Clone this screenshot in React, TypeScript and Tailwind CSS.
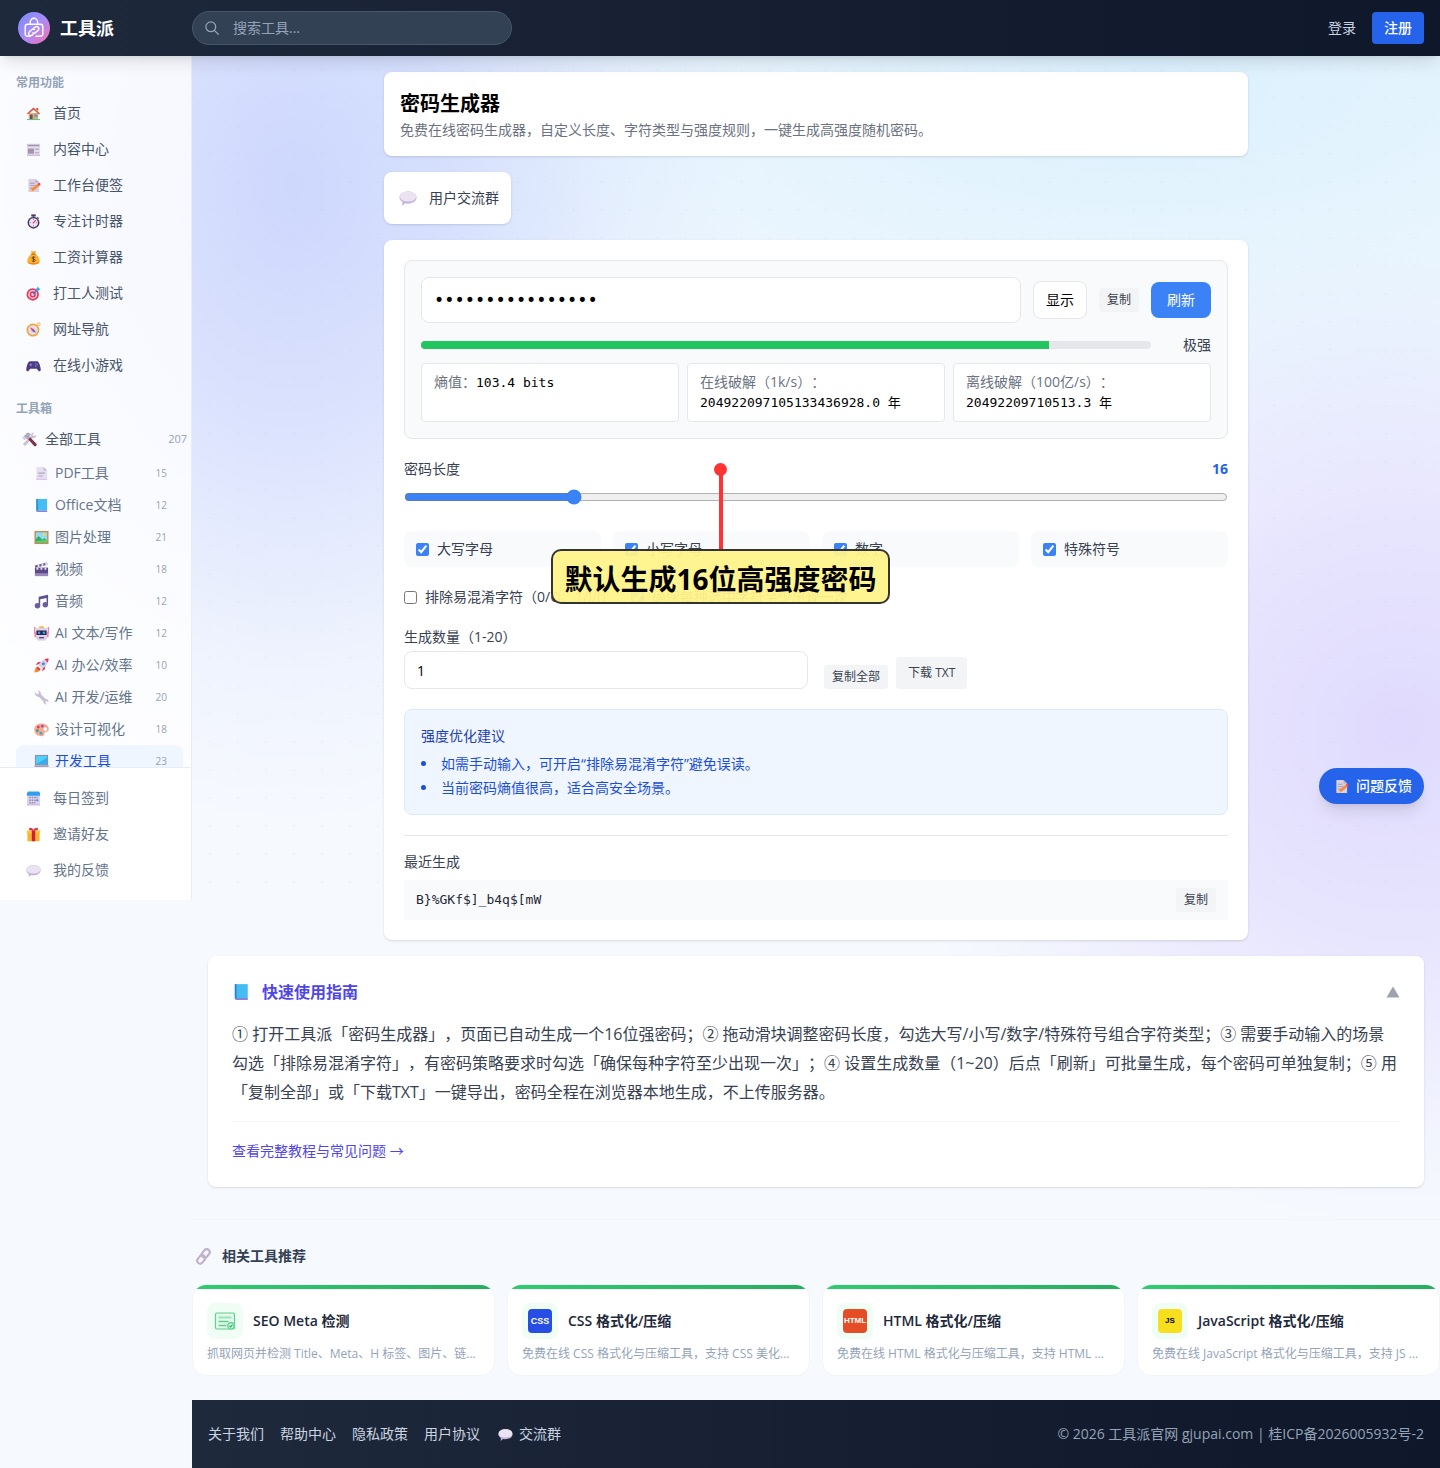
import { useState } from "react";
import type { ReactNode } from "react";

const emojiArt: Record<string, ReactNode> = {
  home: (
    <>
      <path d="M3 7.5h10V14H3z" fill="#e8a86a" />
      <path d="M1 8 8 1.5 15 8l-1 1L8 4 2 9z" fill="#e0533c" />
      <path d="M11 2.2h2v3.2l-2-1.8z" fill="#b5533c" />
      <path d="M4.2 9.2H7V14H4.2z" fill="#6b4a5c" />
      <path d="M9 9h3v2.6H9z" fill="#35a7ee" />
      <path d="M1 14h14v1H1z" fill="#3fc47a" />
    </>
  ),
  news: (
    <>
      <path d="M1 2h14v12.600H1z" fill="#e3dcea" />
      <path d="M1 2h14v3.200H1z" fill="#cfc6da" />
      <path d="M2.200 3.200h11.600v1H2.200z" fill="#9f92b0" />
      <path d="M2 7h6.500v5.500H2z" fill="#a294b0" />
      <path d="M9.800 7h4v1.500h-4zM9.800 10.600h4v1.500h-4z" fill="#b9aeca" />
      <path d="M1 13.600h14v1H1z" fill="#c9a8e0" />
    </>
  ),
  memo: (
    <>
      <path d="M2.5 1h7.6L14 4.8V15H2.5z" fill="#d9d2e2" />
      <path d="M10.1 1v3.8H14z" fill="#b6a7c8" />
      <path d="M4.2 5h5v1h-5zM4.2 7.6h7v1h-7zM4.2 10.2h3.6v1H4.2z" fill="#a79ab8" />
      <path d="m4.6 14.6.8-3L12.6 6l2 2.2-7 5.6z" fill="#fb8b3c" />
      <path d="m12.2 6.3 1.2-1c1.5-.5 2.4.8 2 2l-1.2 1z" fill="#ef4c50" />
      <path d="m4.4 14.8.9-2.6 2 1.6z" fill="#ffd0a0" />
    </>
  ),
  watch: (
    <>
      <path d="M5.6.4h4.8v2.2H5.6z" fill="#4a3a66" />
      <path d="M7 2h2v2H7zM12.4 2.8l1.6 1.5-1.1 1.1-1.6-1.5z" fill="#6d5a8c" />
      <circle cx="8" cy="9.2" r="6.4" fill="#4b3c68" />
      <circle cx="8" cy="9.2" r="4.8" fill="#eee6f5" />
      <path d="M8 5v1.4M8 12v1.4M3.9 9.2h1.3M10.8 9.2h1.3" stroke="#8a7aa6" />
      <path d="m7.4 10 3-3.4" stroke="#ef3c66" strokeWidth="1.4" />
    </>
  ),
  money: (
    <>
      <path d="M5.4.8c1.6 1 3.6 1 5.2 0L9.8 4H6.2z" fill="#f5a623" />
      <path d="M6.2 4h3.6c3 2 4.8 5 4.8 7.6 0 2.6-2 3.8-6.6 3.8s-6.6-1.2-6.6-3.8C1.400 9 3.200 6 6.200 4z" fill="#fbb02e" />
      <path d="M1.600 12.500c1 2 3 2.900 6.400 2.900s5.400-.9 6.400-2.900c-2 1.300-4 1.600-6.400 1.600s-4.400-.3-6.400-1.600z" fill="#ef7f1a" />
      <path d="M5.600 3.800h4.800v1.300H5.600z" fill="#c3691d" />
      <path d="M9.900 8.100C8.900 7.200 6.300 7.300 6.300 8.600c0 1.500 3.600.8 3.600 2.400 0 1.400-2.700 1.500-3.800.5M8 6.500v6.600" fill="none" stroke="#6b4423" />
    </>
  ),
  target: (
    <>
      <circle cx="7.200" cy="9" r="6.600" fill="#e8375e" />
      <circle cx="7.200" cy="9" r="4.800" fill="#f9d5e0" />
      <circle cx="7.200" cy="9" r="3.300" fill="#e8375e" />
      <circle cx="7.200" cy="9" r="1.500" fill="#fff" />
      <path d="m7.200 9 5-5" stroke="#2f6fd0" strokeWidth="1.300" />
      <path d="m10.800 3.200 2-2.800.8 2 2 .8-2.800 2.200-2.200.2z" fill="#35a7ee" />
    </>
  ),
  compass: (
    <>
      <circle cx="13.600" cy="2.400" r="1.500" fill="none" stroke="#f3b04a" />
      <circle cx="7.400" cy="8.600" r="6.900" fill="#f0a43c" />
      <circle cx="7.400" cy="8.600" r="5.200" fill="#e5dcec" />
      <path d="m4.200 5.600 4.400 2-2.200 2z" fill="#e2476a" />
      <path d="m10.600 11.700-4.300-2 2.200-2.100z" fill="#6d5a8c" />
    </>
  ),
  game: (
    <>
      <path d="M4.200 3.400h7.600c2 0 3.600 5 3.900 8.600.2 2.600-1.800 2.700-2.800 1.200L11.600 11.400H4.400L3.100 13.200C2.100 14.700.1 14.600.3 12 .6 8.400 2.200 3.400 4.200 3.400z" fill="#4d3b8a" />
      <path d="M3.600 7.200h3M5.100 5.700v3" stroke="#9b8bd0" />
      <circle cx="10.400" cy="6" r=".8" fill="#35a7ee" />
      <circle cx="12" cy="7.200" r=".8" fill="#ef4c66" />
      <circle cx="10.400" cy="8.500" r=".8" fill="#3fc47a" />
    </>
  ),
  tools: (
    <>
      <path d="m1 12.800 8.600-8.600c-.4-2 1.200-3.800 3.400-3.600l-1.600 1.800.4 1.500 1.500.4L15.300 3c.4 2.300-1.600 4-3.700 3.500L3.200 15z" fill="#c9c0d4" />
      <path d="m6.600 7.600 2-2 6.800 7c1 1.600-1 3.400-2.500 2.200z" fill="#7d3348" />
      <path d="M.4 6 5.600.8c1.800 0 2.800.6 4 1.800L7.800 4.200l1 1.200L6 8.200 4.800 7 2.600 8.400z" fill="#b3a6c2" />
      <path d="M.4 6 2 4.400l2.400 2.300-1.800 1.700z" fill="#dcd4e6" />
    </>
  ),
  page: (
    <>
      <path d="M2.5 1h7.7L14 4.800V15H2.500z" fill="#e6dff0" />
      <path d="M10.200 1v3.800H14z" fill="#c4b5d6" />
      <path d="M4.600 7h7v1.200h-7zM4.600 10h5v1.200h-5z" fill="#b3a5c6" />
      <path d="M2.500 13.800H14V15H2.500z" fill="#dcc3ee" />
    </>
  ),
  book: (
    <>
      <path d="M2.500 1H14v12.500H2.500z" fill="#45bdf2" />
      <path d="M2.500 1H4v13.500H2.500z" fill="#2a84cd" />
      <path d="M3 13.300h11V15H3.500z" fill="#8b83d6" />
    </>
  ),
  picture: (
    <>
      <path d="M.5 1h15v14H.5z" fill="#c98a52" />
      <path d="M2 2.500h12v11H2z" fill="#8edcf5" />
      <circle cx="10.800" cy="5" r="1.500" fill="#ffd34d" />
      <path d="m2 9.500 3-3 4 4 2-2 3 3v2H2z" fill="#2fae6b" />
      <path d="M2 12c4-1.500 8-.5 12-2v3.500H2z" fill="#62cc66" />
    </>
  ),
  film: (
    <>
      <path d="M1 6h14v9H1z" fill="#5b4a86" />
      <path d="M1 12h14v3H1z" fill="#9a89bd" />
      <path d="m.8 3.600 13-3.200.6 2.600L1.400 6.200z" fill="#6a5898" />
      <path d="m3.600 3 2-.5.4 2.600-2 .5zM7.800 2l2-.5.4 2.600-2 .5zM11.800 1l1.800-.4.5 2.500-1.800.4zM2.600 6.200h2v2h-2zM6.900 6.200h2v2h-2zM11.200 6.200h2v2h-2z" fill="#e3dbf0" />
    </>
  ),
  music: (
    <>
      <path d="M5 2.800 15 .8V4L6.600 5.600V13H5z" fill="#5f5190" />
      <path d="M13.400 2H15v9.500h-1.600z" fill="#5f5190" />
      <circle cx="3.700" cy="12.600" r="2.900" fill="#6c5da0" />
      <circle cx="12.100" cy="11.400" r="2.900" fill="#6c5da0" />
    </>
  ),
  robot: (
    <>
      <path d="M.8 1v7M15.200 1v7" stroke="#e0527c" />
      <path d="M5.500.4h5V3h-5z" fill="#f1b23e" />
      <path d="M2 2h12v11l-2.500 2.600h-7L2 13z" fill="#ddd3e8" />
      <path d="M.4 6h1.800v6H.4zM13.800 6h1.800v6h-1.800z" fill="#f08aa8" />
      <path d="M2.600 4.800h10.800v4.800H2.600z" fill="#2e2550" />
      <circle cx="5.400" cy="7.200" r="1.300" fill="#35a7ee" />
      <circle cx="10.600" cy="7.200" r="1.300" fill="#35a7ee" />
      <path d="M5.400 11.700h5.200v1.500H5.400z" fill="#5a4a78" />
    </>
  ),
  rocket: (
    <>
      <path d="M6 6.500 1.600 7.400 4 4.500l3.500-.6zM9.500 10l-.9 4.400 2.900-2.400.6-3.500z" fill="#e8375e" />
      <path d="M15.500.5c.4 4-2.500 8-7 11L4.500 7.500c3-4.500 7-7.400 11-7z" fill="#d9d0e4" />
      <path d="M15.500.5c0 1.700-.3 2.800-.9 4.200L11.300 1.400C12.700.8 13.800.5 15.500.5z" fill="#e8375e" />
      <circle cx="10" cy="6" r="1.600" fill="#3a8fdc" />
      <path d="M4 9 7 12c-1 2.500-3.500 3.500-6.500 3.500C.5 12.500 1.500 10 4 9z" fill="#f98a2e" />
      <path d="M4 9 7 12l-1.800 1.500L2.500 11z" fill="#e0435a" />
    </>
  ),
  wrench: (
    <path
      d="M1 2.200 3.400 4.400 5 3.800 5.200 2.200 3.200.8C5.800.2 7.800 2 7.400 4.600l5 5c2.200-.3 3.600 1.600 3 3.800l-1.700-1.500-1.400.4-.3 1.500 1.600 1.500c-2.300.5-4-1-3.700-3.200L5 7.200C2.600 7.600.4 5 1 2.200z"
      fill="#c9bfd6"
    />
  ),
  palette: (
    <>
      <path d="M8 1.500c5.200 0 8 2.800 7.800 6.600-.2 2.800-3.200 2.200-4.200 3.200-1.200 1.200 0 3.600-2.600 3.800C4 15.300.2 12.300.2 8.200.2 4.300 3.500 1.500 8 1.500z" fill="#f7a98a" />
      <circle cx="12" cy="7.600" r="1.900" fill="#fff" />
      <circle cx="8.800" cy="4.400" r="1.500" fill="#9650d8" />
      <circle cx="4.600" cy="5.400" r="1.500" fill="#e8375e" />
      <circle cx="3.600" cy="9.200" r="1.500" fill="#2aa198" />
      <circle cx="7.400" cy="12" r="1.500" fill="#35a7ee" />
    </>
  ),
  laptop: (
    <>
      <path d="M1 1h14v11H1z" fill="#8f86a3" />
      <path d="M2 2h12v9H2z" fill="#4ed0f7" />
      <path d="m2 11 12-7v7z" fill="#35aef0" />
      <path d="M.3 12h15.400l-.5 2.500H.8z" fill="#a79eb8" />
    </>
  ),
  calendar: (
    <>
      <path d="M1 4h14v11.200H1z" fill="#ddd5ee" />
      <path d="M2.500.6h11L15 2v3H1V2z" fill="#2f9df0" />
      <path d="M3.500 7h9M3.500 9.800h9M3.500 12.600h6.500" stroke="#8d84ae" strokeWidth="1.600" strokeDasharray="1.600 1" />
      <path d="M11.200 9h2v2h-2z" fill="#2f9df0" />
      <path d="M1 14.300h14v1H1z" fill="#cbb0ec" />
    </>
  ),
  gift: (
    <>
      <path d="M1.500 6h13v9.200h-13z" fill="#fbb12f" />
      <path d="M.8 3.600h14.400v3.200H.8z" fill="#fdc640" />
      <path d="M6.200 3.600h3.600v11.600H6.200z" fill="#c92040" />
      <path d="M8 3.800C4.500 4 2.600 3 3.200 1.500 4 0 7 .8 8 3c1-2.200 4-3 4.800-1.500C13.400 3 11.500 4 8 3.800z" fill="#e3334f" />
    </>
  ),
  chat: (
    <>
      <path d="M8 2.200c4.200 0 7.600 2.300 7.600 5.400S12.200 13 8 13c-.9 0-1.700-.1-2.500-.3L2.800 14.800l.3-3.200C1.400 10.600.4 9.200.4 7.600c0-3.100 3.400-5.400 7.600-5.400z" fill="#c4b0dc" />
      <path d="M8 2.400c4.200 0 7.200 1.800 7.200 4.400S12.200 11.200 8 11.200.8 9.400.8 6.800 3.800 2.400 8 2.400z" fill="#ebe3f2" />
    </>
  ),
  link: (
    <g fill="none" stroke="#bfb0cc" strokeWidth="2">
      <rect x="7.300" y="0.800" width="5.600" height="8.600" rx="2.800" transform="rotate(38 10.100 5.100)" />
      <rect x="3" y="6.400" width="5.600" height="8.600" rx="2.800" transform="rotate(38 5.800 10.700)" />
    </g>
  ),
};

function Emoji({ name, className = "size-4" }: { name: string; className?: string }) {
  return (
    <svg viewBox="0 0 16 16" className={`shrink-0 ${className}`} aria-hidden="true">
      {emojiArt[name]}
    </svg>
  );
}

const commonLinks = [
  { icon: "home", label: "首页" },
  { icon: "news", label: "内容中心" },
  { icon: "memo", label: "工作台便签" },
  { icon: "watch", label: "专注计时器" },
  { icon: "money", label: "工资计算器" },
  { icon: "target", label: "打工人测试" },
  { icon: "compass", label: "网址导航" },
  { icon: "game", label: "在线小游戏" },
];

const categories = [
  { icon: "page", label: "PDF工具", count: 15 },
  { icon: "book", label: "Office文档", count: 12 },
  { icon: "picture", label: "图片处理", count: 21 },
  { icon: "film", label: "视频", count: 18 },
  { icon: "music", label: "音频", count: 12 },
  { icon: "robot", label: "AI 文本/写作", count: 12 },
  { icon: "rocket", label: "AI 办公/效率", count: 10 },
  { icon: "wrench", label: "AI 开发/运维", count: 20 },
  { icon: "palette", label: "设计可视化", count: 18 },
  { icon: "laptop", label: "开发工具", count: 23, active: true },
];

const userLinks = [
  { icon: "calendar", label: "每日签到" },
  { icon: "gift", label: "邀请好友" },
  { icon: "chat", label: "我的反馈" },
];

const related = [
  { icon: "seo", title: "SEO Meta 检测", desc: "抓取网页并检测 Title、Meta、H 标签、图片、链接与结构化数据" },
  { icon: "css", title: "CSS 格式化/压缩", desc: "免费在线 CSS 格式化与压缩工具，支持 CSS 美化、压缩与校验" },
  { icon: "html", title: "HTML 格式化/压缩", desc: "免费在线 HTML 格式化与压缩工具，支持 HTML 美化与压缩" },
  { icon: "js", title: "JavaScript 格式化/压缩", desc: "免费在线 JavaScript 格式化与压缩工具，支持 JS 代码美化" },
];

function Header() {
  return (
    <header className="relative z-20 flex h-14 items-center bg-linear-to-r from-[#1e293b] to-[#0f172a] pr-4 shadow-lg">
      <a href="#" className="flex w-48 shrink-0 items-center gap-2.5 pl-[18px]">
        <svg viewBox="0 0 32 32" className="size-8" aria-hidden="true">
          <defs>
            <linearGradient id="logo" x1="0" y1="0" x2="1" y2="1">
              <stop offset="0.1" stopColor="#818cf8" />
              <stop offset="0.5" stopColor="#a78bfa" />
              <stop offset="0.95" stopColor="#f472b6" />
            </linearGradient>
          </defs>
          <circle cx="16" cy="16" r="16" fill="url(#logo)" />
          <g fill="none" stroke="#fff" strokeWidth="1.400" strokeLinecap="round">
            <path d="M12 24.300H9.500a2.300 2.300 0 0 1-2.300-2.300v-7.500a2.300 2.300 0 0 1 2.300-2.300h13a2.300 2.300 0 0 1 2.300 2.300V22a2.300 2.300 0 0 1-2.300 2.300H18" />
            <path d="M12.200 12V10a3.700 3.700 0 0 1 7.400 0v2" />
            <path d="m15.500 16.300 1.600-1.300c2.400-1.600 5 1.200 3 3.300l-2.600 2.300c-1 .8-2 .6-2.700.2" />
            <path d="m15.200 22.200-1.200 1c-2.300 1.500-4.600-1.200-2.800-3.200l2.600-2.300c1-.8 2-.7 2.700-.2" />
          </g>
        </svg>
        <span className="text-lg font-bold text-white">工具派</span>
      </a>
      <label className="flex h-[34px] w-80 items-center gap-[14px] rounded-full border border-[#475569] bg-[#334155] px-3">
        <svg viewBox="0 0 14 14" className="size-[14px] shrink-0" fill="none" stroke="#94a3b8" strokeWidth="1.300" aria-hidden="true">
          <circle cx="5.800" cy="5.800" r="4.900" />
          <path d="m9.400 9.400 4.200 4.200" />
        </svg>
        <input
          type="search"
          aria-label="搜索工具"
          placeholder="搜索工具..."
          className="min-w-0 flex-1 bg-transparent text-sm text-white outline-none placeholder:text-[#94a3b8]"
        />
      </label>
      <div className="ml-auto flex items-center gap-4 text-sm">
        <a href="#" className="text-[#cbd5e1]">登录</a>
        <a href="#" className="rounded bg-[#2563eb] px-3 py-1.5 font-medium text-white">注册</a>
      </div>
    </header>
  );
}

function Sidebar() {
  return (
    <aside className="flex h-[844px] w-48 shrink-0 flex-col border-r border-[#e8edf5] bg-white/80 text-sm">
      <nav className="min-h-0 flex-1 overflow-hidden pt-[17px]">
        <h2 className="mb-0.5 px-4 text-xs/5 font-bold text-[#94a3b8]">常用功能</h2>
        {commonLinks.map((item) => (
          <a key={item.label} href="#" className="flex h-9 items-center gap-3 pl-[26px] text-[#475569]">
            <Emoji name={item.icon} className="size-[15px]" />
            {item.label}
          </a>
        ))}
        <h2 className="mt-4 mb-0.5 px-4 text-xs/5 font-bold text-[#94a3b8]">工具箱</h2>
        <a href="#" className="flex h-9 items-center gap-2 pr-1 pl-[22px] text-[#475569]">
          <Emoji name="tools" className="size-[15px]" />
          全部工具
          <span className="ml-auto text-[11px] text-[#94a3b8]">207</span>
        </a>
        {categories.map((item) => (
          <a
            key={item.label}
            href="#"
            className={`mr-2 ml-4 flex h-8 items-center gap-1.5 rounded-lg pr-4 pl-[18px] ${
              item.active ? "bg-[#eff6ff] text-[#1d4ed8]" : "text-[#64748b]"
            }`}
          >
            <Emoji name={item.icon} className="size-[15px]" />
            {item.label}
            <span className="ml-auto text-[10px] text-[#94a3b8]">{item.count}</span>
          </a>
        ))}
      </nav>
      <div className="border-t border-[#e8edf5] bg-white pt-3 pb-3">
        {userLinks.map((item) => (
          <a key={item.label} href="#" className="flex h-9 items-center gap-3 pl-[26px] text-[#64748b]">
            <Emoji name={item.icon} className="size-[15px]" />
            {item.label}
          </a>
        ))}
      </div>
    </aside>
  );
}

function SmallButton({ children, onClick }: { children: ReactNode; onClick?: () => void }) {
  return (
    <button type="button" onClick={onClick} className="rounded bg-[#f3f4f6] px-2 py-1 text-xs text-[#374151]">
      {children}
    </button>
  );
}

function Stat({ label, value }: { label: string; value: string }) {
  return (
    <div className="rounded border border-[#e5e7eb] bg-white px-3 py-2">
      <span className="text-[#6b7280]">{label}</span>
      <span className="font-['DejaVu_Sans_Mono','Noto_Sans_CJK_SC',monospace] text-[13px]/4 text-black">{value}</span>
    </div>
  );
}

function Generator() {
  const [password] = useState("B}%GKf$]_b4q$[mW");
  const [visible, setVisible] = useState(false);
  const [length, setLength] = useState(16);
  const strength = 86;

  return (
    <section className="relative rounded-lg bg-white p-5 text-sm shadow-sm">
      <div className="rounded-lg border border-[#e5e7eb] bg-[#f9fafb] p-4">
        <div className="flex items-center gap-3">
          <input
            type={visible ? "text" : "password"}
            aria-label="密码"
            readOnly
            value={password}
            className="h-[46px] min-w-0 flex-1 rounded-lg border border-[#e5e7eb] bg-white px-3 font-['DejaVu_Sans_Mono',monospace] text-[17px] text-black"
          />
          <button
            type="button"
            onClick={() => setVisible(!visible)}
            className="rounded-lg border border-[#e5e7eb] bg-white px-3 py-2 text-black"
          >
            {visible ? "隐藏" : "显示"}
          </button>
          <SmallButton>复制</SmallButton>
          <button type="button" className="rounded-lg bg-[#3b82f6] px-4 py-2 text-white">刷新</button>
        </div>
        <div className="mt-3 flex items-center gap-3">
          <div className="h-2 flex-1 overflow-hidden rounded-full bg-[#e5e7eb]">
            <div className="h-full bg-[#22c55e]" style={{ width: `${strength}%` }} />
          </div>
          <span className="w-12 text-right text-[#374151]">极强</span>
        </div>
        <div className="mt-2 grid min-h-[59px] grid-cols-3 gap-2">
          <Stat label="熵值：" value="103.4 bits" />
          <Stat label="在线破解（1k/s）：" value="204922097105133436928.0 年" />
          <Stat label="离线破解（100亿/s）：" value="20492209710513.3 年" />
        </div>
      </div>

      <div className="mt-5 flex justify-between">
        <label htmlFor="length" className="text-[#374151]">密码长度</label>
        <span className="font-bold text-[#2563eb]">{length}</span>
      </div>
      <div className="mt-2 flex h-5 items-center">
        <input
          id="length"
          type="range"
          min={4}
          max={64}
          value={length}
          onChange={(e) => setLength(Number(e.target.value))}
          className="w-full accent-[#3b82f6]"
        />
      </div>

      <div className="mt-6 grid grid-cols-4 gap-3">
        {["大写字母", "小写字母", "数字", "特殊符号"].map((label) => (
          <label key={label} className="flex items-center gap-2 rounded-lg bg-[#f9fafb] px-3 py-2 text-[#374151]">
            <input type="checkbox" defaultChecked className="accent-[#3b82f6]" />
            {label}
          </label>
        ))}
      </div>
      <div className="mt-5 flex flex-wrap gap-4 text-[#374151]">
        <label className="flex items-center gap-2">
          <input type="checkbox" className="accent-[#3b82f6]" />
          排除易混淆字符（0/O、1/l/I）
        </label>
        <label className="flex items-center gap-2">
          <input type="checkbox" defaultChecked className="accent-[#3b82f6]" />
          确保每种选中字符至少出现一次
        </label>
      </div>

      <div className="mt-5 grid grid-cols-2 gap-4">
        <div>
          <label htmlFor="amount" className="mb-1 block text-[#374151]">生成数量（1-20）</label>
          <input
            id="amount"
            type="number"
            min={1}
            max={20}
            defaultValue={1}
            className="block h-[38px] w-full rounded-lg border border-[#e5e7eb] bg-white px-3 text-black"
          />
        </div>
        <div className="flex items-end gap-2">
          <SmallButton>复制全部</SmallButton>
          <button type="button" className="rounded bg-[#f3f4f6] px-3 py-2 text-xs text-[#374151]">下载 TXT</button>
        </div>
      </div>

      <div className="mt-5 rounded-lg border border-[#dbeafe] bg-[#eff6ff] p-4">
        <h3 className="text-[#1e40af]">强度优化建议</h3>
        <ul className="mt-2 list-inside list-disc space-y-1 text-[#1d4ed8]">
          <li>如需手动输入，可开启“排除易混淆字符”避免误读。</li>
          <li>当前密码熵值很高，适合高安全场景。</li>
        </ul>
      </div>

      <div className="mt-5 border-t border-[#e5e7eb] pt-4">
        <h3 className="text-[#374151]">最近生成</h3>
        <div className="mt-2 flex items-center justify-between rounded bg-[#f9fafb] px-3 py-2">
          <code className="font-['DejaVu_Sans_Mono',monospace] text-[13px] text-[#1f2937]">{password}</code>
          <SmallButton>复制</SmallButton>
        </div>
      </div>

      {/* callout pinned over the options */}
      <div className="pointer-events-none absolute top-[223px] left-1/2 flex w-[339px] -translate-x-[265px] flex-col items-center">
        <div className="size-[13px] rounded-full bg-[#ff3333]" />
        <div className="-mt-1 h-[77px] w-1 bg-[#ff3333]" />
        <div className="flex h-[55px] w-full items-center justify-center rounded-[10px] border-2 border-[#333] bg-[#fff38a]/95 pt-1 text-[28px] font-bold whitespace-nowrap text-black">
          默认生成16位高强度密码
        </div>
      </div>
    </section>
  );
}

function Guide() {
  return (
    <section className="mt-4 rounded-lg bg-white p-6 shadow-sm">
      <button type="button" className="flex w-full items-center text-base font-bold text-[#4f46e5]">
        <Emoji name="book" className="mr-3 size-[18px]" />
        快速使用指南
        <svg viewBox="0 0 14 12" className="ml-auto h-3 w-3.5" aria-hidden="true">
          <path d="M7 0.500 13.500 11.500H0.500z" fill="#9ca3af" />
        </svg>
      </button>
      <p className="mt-4 text-base/[29px] text-[#374151]">
        ① 打开工具派「密码生成器」，页面已自动生成一个16位强密码；② 拖动滑块调整密码长度，勾选大写/小写/数字/特殊符号组合字符类型；③ 需要手动输入的场景勾选「排除易混淆字符」，有密码策略要求时勾选「确保每种字符至少出现一次」；④ 设置生成数量（1~20）后点「刷新」可批量生成，每个密码可单独复制；⑤ 用「复制全部」或「下载TXT」一键导出，密码全程在浏览器本地生成，不上传服务器。
      </p>
      <div className="mt-3.5 border-t border-[#f3f4f6] pt-4">
        <a href="#" className="text-sm/6 text-[#4f46e5]">查看完整教程与常见问题 →</a>
      </div>
    </section>
  );
}

function ToolIcon({ name }: { name: string }) {
  if (name === "seo") {
    return (
      <svg viewBox="0 0 24 24" className="size-6" fill="none" stroke="#5fd08c" strokeWidth="1.200" aria-hidden="true">
        <rect x="2.500" y="4" width="19" height="16" rx="1.500" fill="#e3f9ec" />
        <path d="M5.500 8.500h13" stroke="#9be3b8" strokeWidth="2" />
        <path d="M5.500 12.500h10M5.500 16.500h8" strokeWidth="1.400" />
        <circle cx="18" cy="16.800" r="3.200" fill="#c9f2d9" />
        <path d="m16.600 17 1 1 1.900-2.100" stroke="#27ae60" />
      </svg>
    );
  }
  if (name === "css") {
    return (
      <span className="flex size-6 items-center justify-center rounded bg-[#264de4] font-['Liberation_Sans',sans-serif] text-[9px] font-bold text-white">CSS</span>
    );
  }
  if (name === "html") {
    return (
      <span className="flex size-6 items-center justify-center rounded bg-[#e44d26] font-['Liberation_Sans',sans-serif] text-[8px] font-bold text-white">HTML</span>
    );
  }
  return (
    <span className="flex size-6 items-center justify-center rounded bg-[#f7df1e] font-['Liberation_Sans',sans-serif] text-[8px] font-bold text-black">JS</span>
  );
}

function RelatedTools() {
  return (
    <section className="mt-8 border-t border-[#f1f5f9] pt-6 pb-6">
      <h2 className="flex h-6 items-center gap-2.5 pl-[3px] text-sm font-semibold text-[#334155]">
        <Emoji name="link" className="size-[17px]" />
        相关工具推荐
      </h2>
      <div className="mt-4 grid grid-cols-4 gap-3">
        {related.map((tool) => (
          <a
            key={tool.title}
            href="#"
            className="relative min-w-0 overflow-hidden rounded-[14px] border border-[#f1f5f9] bg-white px-[14px] pt-[18px] pb-3"
          >
            <span className="absolute inset-x-0 top-0 h-1 bg-linear-to-r from-[#2ecc71] to-[#27ae60]" />
            <span className="flex items-center gap-2.5 text-sm font-semibold text-[#1e293b]">
              <span className="flex size-9 items-center justify-center rounded-lg bg-[#f0fdf4]">
                <ToolIcon name={tool.icon} />
              </span>
              {tool.title}
            </span>
            <span className="mt-1.5 block truncate pr-1 text-xs/[18px] text-[#94a3b8]">{tool.desc}</span>
          </a>
        ))}
      </div>
    </section>
  );
}

function Footer() {
  return (
    <footer className="flex items-center justify-between bg-linear-to-r from-[#1e293b] to-[#0f172a] px-4 py-6 text-sm">
      <nav className="flex gap-4 text-[#cbd5e1]">
        <a href="#">关于我们</a>
        <a href="#">帮助中心</a>
        <a href="#">隐私政策</a>
        <a href="#">用户协议</a>
        <a href="#" className="flex items-center gap-1.5">
          <Emoji name="chat" className="ml-0.5 size-[15px]" />
          交流群
        </a>
      </nav>
      <p className="text-[#94a3b8]">© 2026 工具派官网 gjupai.com | 桂ICP备2026005932号-2</p>
    </footer>
  );
}

export default function App() {
  return (
    <div className="relative isolate bg-[#f6f9fe] font-['Open_Sans','Noto_Sans_CJK_SC',sans-serif] [text-spacing-trim:space-all]">
      <div className="absolute inset-0 -z-10 bg-[radial-gradient(ellipse_460px_640px_at_290px_190px,rgba(165,180,252,0.48),rgba(165,180,252,0.34)_35%,rgba(165,180,252,0.08)_75%,transparent),radial-gradient(ellipse_520px_500px_at_1400px_730px,rgba(196,181,253,0.45),rgba(196,181,253,0.3)_40%,rgba(196,181,253,0.05)_85%,transparent),radial-gradient(ellipse_1000px_440px_at_1150px_70px,rgba(186,230,253,0.45),rgba(186,230,253,0.22)_50%,transparent)]" />
      <div className="absolute inset-x-0 top-0 -z-10 h-[900px] bg-[radial-gradient(circle,rgba(99,102,241,0.05)_1px,transparent_1px)] bg-size-[28px_28px]" />
      <Header />
      <div className="flex items-start">
        <Sidebar />
        <div className="min-w-0 flex-1">
          <main>
            <div className="px-4 pt-4">
              <div className="mx-auto max-w-[864px] space-y-4">
                <section className="rounded-lg bg-white p-4 shadow-sm">
                  <h1 className="text-xl/8 font-bold text-black">密码生成器</h1>
                  <p className="text-sm text-[#6b7280]">
                    免费在线密码生成器，自定义长度、字符类型与强度规则，一键生成高强度随机密码。
                  </p>
                </section>
                <button
                  type="button"
                  className="flex h-[52px] items-center gap-[9px] rounded-lg bg-white px-3 text-sm text-[#374151] shadow-sm"
                >
                  <span className="flex w-6 justify-center">
                    <Emoji name="chat" className="size-[18px]" />
                  </span>
                  用户交流群
                </button>
                <Generator />
              </div>
              <Guide />
            </div>
            <RelatedTools />
          </main>
          <Footer />
        </div>
      </div>
      <button
        type="button"
        className="absolute top-[768px] right-4 flex h-9 items-center gap-[5px] rounded-full bg-[#2563eb] px-3 text-sm font-medium text-white shadow-lg"
      >
        <span className="flex w-5 justify-center">
          <Emoji name="memo" className="size-[15px]" />
        </span>
        问题反馈
      </button>
    </div>
  );
}
